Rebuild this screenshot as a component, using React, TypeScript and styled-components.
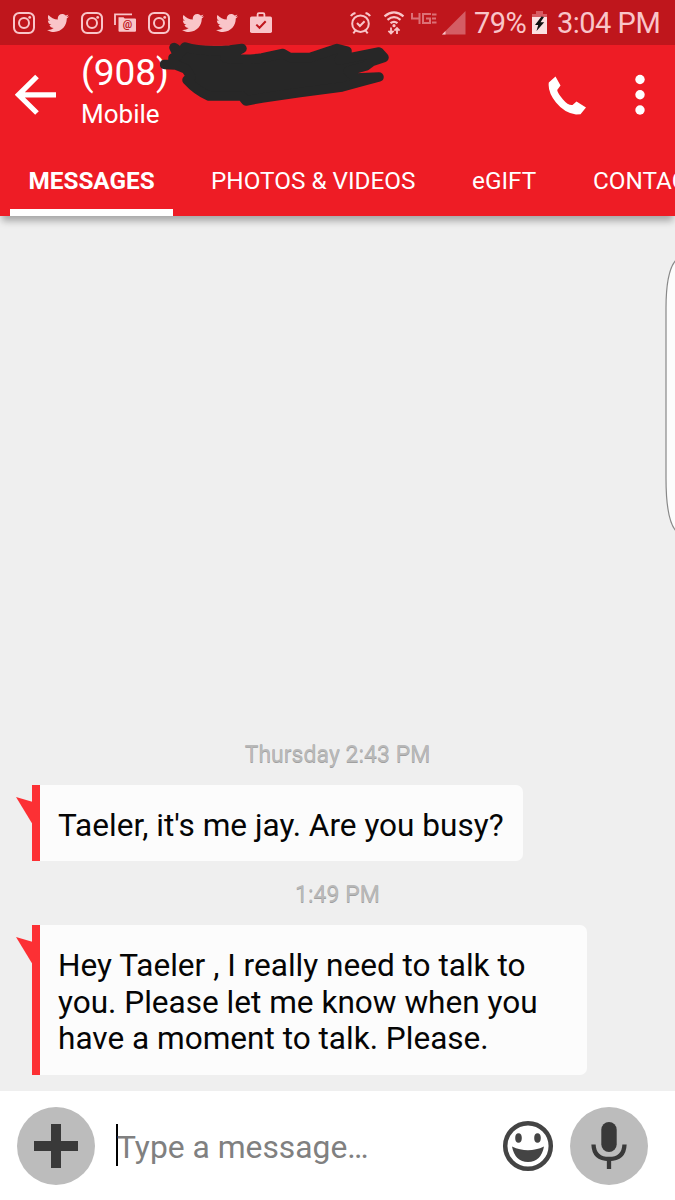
import React from "react";
import styled, { createGlobalStyle } from "styled-components";
import { FaTwitter } from "react-icons/fa";

const GlobalStyle = createGlobalStyle`
  * { box-sizing: border-box; }
  body { margin: 0; background: #efefef; font-family: Roboto, "Liberation Sans", sans-serif; }
`;

const Screen = styled.main`
  width: 675px;
  height: 1200px;
  display: flex;
  flex-direction: column;
  overflow: hidden;
  background: #efefef;
`;

const StatusBar = styled.div`
  height: 45px;
  flex: none;
  display: flex;
  align-items: center;
  justify-content: space-between;
  padding: 0 15px 0 13px;
  background: #bf161c;
  color: #f9c5c9;
`;

const Notifications = styled.div`
  display: flex;
  gap: 11.8px;
  svg { display: block; width: 22px; height: 22px; }
`;

const SystemStatus = styled.div`
  display: flex;
  align-items: center;
  svg { display: block; flex: none; }
`;

const StatusText = styled.span<{ $width: number; $left: number }>`
  width: ${(p) => p.$width}px;
  margin-left: ${(p) => p.$left}px;
  font-size: 29px;
  line-height: 45px;
  letter-spacing: -0.5px;
  white-space: nowrap;
  padding-top: 2px;
`;

const NetworkLabel = styled.span`
  width: 26px;
  height: 12px;
  margin: 0 5px 8px 6px;
  display: flex;
  align-items: flex-start;
`;

const AlarmIcon = styled.svg`
  margin-right: 12px;
`;

const Header = styled.header`
  position: relative;
  z-index: 1;
  height: 170.5px;
  flex: none;
  display: flex;
  flex-direction: column;
  background: #ee1c25;
  color: #fff;
  box-shadow: 0 7px 7px -2px rgba(0, 0, 0, 0.3);
`;

const ContactBar = styled.div`
  height: 102px;
  display: flex;
  align-items: center;
  padding: 0 30px 2px 15px;
  svg { display: block; flex: none; }
`;

const Contact = styled.div`
  position: relative;
  flex: 1;
  height: 100px;
  margin-left: 24px;
`;

const PhoneNumber = styled.div`
  height: 47px;
  padding-top: 6px;
  font-size: 37px;
  line-height: 44px;
`;

const PhoneKind = styled.div`
  padding-top: 7px;
  font-size: 26px;
  line-height: 30px;
`;

const Scribble = styled.svg`
  position: absolute;
  left: 79px;
  top: -5px;
`;

const MenuIcon = styled.svg`
  margin-left: 49px;
`;

const Tabs = styled.nav`
  height: 68.5px;
  display: flex;
  padding-left: 9.5px;
  overflow: hidden;
`;

const Tab = styled.div<{ $width: number; $active?: boolean }>`
  flex: none;
  width: ${(p) => p.$width}px;
  height: 68.5px;
  margin-right: ${(p) => (p.$active ? 19 : 0)}px;
  padding: 19px 0 0 19px;
  font-size: 24.3px;
  line-height: 30px;
  font-weight: ${(p) => (p.$active ? 700 : 400)};
  white-space: nowrap;
  border-bottom: 7.5px solid ${(p) => (p.$active ? "#fff" : "transparent")};
`;

const Conversation = styled.section`
  position: relative;
  flex: 1;
  display: flex;
  flex-direction: column;
  justify-content: flex-end;
  align-items: flex-start;
  padding: 0 0 16px 32px;
`;

const Timestamp = styled.time<{ $top?: number }>`
  align-self: center;
  margin: ${(p) => p.$top ?? 0}px 0 15px -32px;
  height: 30px;
  font-size: 23.05px;
  line-height: 30px;
  color: #b9b9b9;
  text-shadow: 0 1px 0 #a0a0a0;
`;

const Bubble = styled.article<{ $width: number; $height: number }>`
  position: relative;
  width: ${(p) => p.$width}px;
  height: ${(p) => p.$height}px;
  padding: 23px 0 0 18px;
  border-left: 8px solid #fc3034;
  border-radius: 0 7px 7px 0;
  background: #fcfcfc;
  color: #050505;
  font-size: 31.57px;
  line-height: 36.6px;
  white-space: nowrap;
`;

const Tail = styled.svg`
  position: absolute;
  left: -24px;
  top: 12px;
`;

const Line = styled.div``;

const EdgePanel = styled.svg`
  position: absolute;
  right: 0;
  top: 38px;
`;

const Composer = styled.footer`
  height: 109.5px;
  flex: none;
  display: flex;
  align-items: center;
  padding: 1px 27px 0 16.5px;
  background: #fff;
  svg { display: block; flex: none; }
`;

const RoundButton = styled.div<{ $left?: number }>`
  flex: none;
  width: 78px;
  height: 78px;
  margin-left: ${(p) => p.$left ?? 0}px;
  border-radius: 50%;
  display: grid;
  place-items: center;
  background: #bcbcbc;
`;

const Caret = styled.span`
  flex: none;
  width: 2px;
  height: 42px;
  margin: 0 -1px 2px 21.5px;
  background: #000;
`;

const Placeholder = styled.span`
  flex: 1;
  padding-top: 2px;
  font-size: 31.8px;
  line-height: 40px;
  color: #808080;
  white-space: nowrap;
`;

const InstagramIcon = () => (
  <svg viewBox="0 0 22 22" fill="none" stroke="currentColor" strokeWidth="2">
    <rect x="1" y="1" width="20" height="20" rx="5.2" />
    <circle cx="11" cy="11" r="5" />
    <circle cx="16.7" cy="5.4" r="1.4" fill="currentColor" stroke="none" />
  </svg>
);

const MailStackIcon = () => (
  <svg viewBox="0 0 22 22">
    <path d="M1 13V2.3h17" fill="none" stroke="currentColor" strokeWidth="1.8" />
    <path d="M4.5 5.2h5l1.2 1.3H21a1 1 0 0 1 1 1v11.2a1 1 0 0 1-1 1H5.5a1 1 0 0 1-1-1z" fill="currentColor" />
    <text x="13.4" y="15.8" textAnchor="middle" fontSize="10.5" fontWeight="700" fill="#bf161c">@</text>
  </svg>
);

const WorkIcon = () => (
  <svg viewBox="0 0 22 22">
    <path d="M7.6 6V2.500q0-1.300 1.300-1.300h4.200q1.300 0 1.300 1.300V6" fill="none" stroke="currentColor" strokeWidth="1.8" />
    <rect y="4.5" width="22" height="16.5" rx="1.7" fill="currentColor" />
    <path d="M6.3 12.600l3.200 3.200 6.200-6.500" fill="none" stroke="#bf161c" strokeWidth="2" />
  </svg>
);

const App = () => (
  <>
    <GlobalStyle />
    <Screen>
      <StatusBar>
        <Notifications>
          <InstagramIcon />
          <FaTwitter />
          <InstagramIcon />
          <MailStackIcon />
          <InstagramIcon />
          <FaTwitter />
          <FaTwitter />
          <WorkIcon />
        </Notifications>
        <SystemStatus>
          <AlarmIcon width="21" height="24" viewBox="0 0 21 24" fill="none" stroke="currentColor" strokeWidth="2">
            <circle cx="10.5" cy="12.7" r="8.3" />
            <path d="M7 12l2.900 3 4.700-4.700M1 5.200Q2 2.800 5.500 2M20 5.200Q19 2.800 15.500 2M5.500 19.500L3.300 22.300M15.500 19.500l2.200 2.800" />
          </AlarmIcon>
          <svg width="22" height="24" viewBox="0 0 22 24" fill="none" stroke="currentColor" strokeWidth="2.2">
            <path d="M1.500 5.300Q11-2.500 20.500 5.300M4.500 8.800Q11 3.600 17.500 8.800M7.500 12.200Q11 9.500 14.500 12.200" />
            <circle cx="11" cy="14.7" r="1.6" fill="currentColor" stroke="none" />
            <path d="M8 16.500v6M5.400 19.900L8 22.500l2.600-2.600M14 23v-6M11.400 19.600L14 17l2.600 2.600" strokeWidth="1.8" />
          </svg>
          <NetworkLabel>
            <svg width="26" height="12" viewBox="0 0 26 12" fill="none" stroke="#dc7076" strokeWidth="2">
              <path d="M1 0v5.500h8M8.500 0v11M20 1h-8v9h7V5.500h-4M21 1.500h4.500M21 5.500h4M21 9.500h4.500" />
            </svg>
          </NetworkLabel>
          <svg width="24" height="24" viewBox="0 0 24 24">
            <path d="M0 23.500L23.500 0v23.500z" fill="#d45d64" />
            <path d="M0 23.500l3.500-3.500v3.500z" fill="#f9c5c9" />
          </svg>
          <StatusText $width={58} $left={8}>79%</StatusText>
          <svg width="15" height="23" viewBox="0 0 15 23">
            <path d="M4 0h7v3H4zM0 3h15v4H0z" fill="#d75b63" />
            <path d="M0 6h15v17H0z" fill="#fce0e2" />
            <path d="M9.500 5.500L3 14h3.200L4.500 20l7.700-8.700H8.500L12 6z" fill="#111" />
          </svg>
          <StatusText $width={103} $left={10}>3:04 PM</StatusText>
        </SystemStatus>
      </StatusBar>

      <Header>
        <ContactBar>
          <svg width="42" height="42" viewBox="0 0 42 42" fill="none" stroke="#fff" strokeWidth="5.2">
            <path d="M41 20.800H4M22 2.500L3.500 20.800 22 39" />
          </svg>
          <Contact>
            <PhoneNumber>(908)</PhoneNumber>
            <PhoneKind>Mobile</PhoneKind>
            <Scribble width="232" height="68" viewBox="160 40 232 68">
              <path
                d="M164.500 64.500L173 64L173 58L178 56L174 47.500L181 52L185 47Q200 52 230 50L242 48.500L235 52L225 58Q245 60.500 262 58L283 53.500L290 57.500H310L337 48.500L347 51L339 60L379 52L384 57.500L372 61.500L366 66L348 71L356 78L379 77L364 81L342 87L300 92.500L262 98L246 101L242 96L209 96Q197 91 187 80L191 77L186 69L176 65z"
                fill="#272727"
                stroke="#272727"
                strokeWidth="9.5"
                strokeLinejoin="round"
                strokeLinecap="round"
              />
            </Scribble>
          </Contact>
          <svg width="38" height="39" viewBox="0 0 38 39">
            <path d="M7.500 0.500L0.800 6.500Q-0.500 16 8 26.500Q16.500 37 28 38.500L32.500 38.200L38 31.500L28.500 25.500L24.500 29Q20 29.500 15 23.500Q9.500 17 9.200 14L12.500 9.500z" fill="#fff" />
          </svg>
          <MenuIcon width="10" height="42" viewBox="0 0 10 42" fill="#fff">
            <circle cx="5" cy="5.5" r="4.7" />
            <circle cx="5" cy="20.8" r="4.7" />
            <circle cx="5" cy="36" r="4.7" />
          </MenuIcon>
        </ContactBar>
        <Tabs>
          <Tab $width={163.5} $active>MESSAGES</Tab>
          <Tab $width={261}>PHOTOS &amp; VIDEOS</Tab>
          <Tab $width={121}>eGIFT</Tab>
          <Tab $width={150}>CONTACT</Tab>
        </Tabs>
      </Header>

      <Conversation>
        <Timestamp>Thursday 2:43 PM</Timestamp>
        <Bubble $width={491} $height={76}>
          <Tail width="17" height="28"><path d="M0 0l17 5v23z" fill="#fc3034" /></Tail>
          <Line>Taeler, it's me jay. Are you busy?</Line>
        </Bubble>
        <Timestamp $top={19}>1:49 PM</Timestamp>
        <Bubble $width={555} $height={149.5}>
          <Tail width="17" height="28"><path d="M0 0l17 5v23z" fill="#fc3034" /></Tail>
          <Line>Hey Taeler , I really need to talk to</Line>
          <Line>you. Please let me know when you</Line>
          <Line>have a moment to talk. Please.</Line>
        </Bubble>
        <EdgePanel width="10" height="284" viewBox="0 0 10 284">
          <path d="M11 6Q1 17 1 54V224Q1 266 11 277" fill="#fcfcfc" stroke="#888" strokeWidth="1.2" />
        </EdgePanel>
      </Conversation>

      <Composer>
        <RoundButton>
          <svg width="44" height="44" viewBox="0 0 44 44">
            <path d="M17 0h10v17h17v10H27v17H17V27H0V17h17z" fill="#393939" />
          </svg>
        </RoundButton>
        <Caret />
        <Placeholder>Type a message…</Placeholder>
        <svg width="52" height="52" viewBox="0 0 52 52" fill="#444">
          <circle cx="26" cy="26" r="22.8" fill="none" stroke="#444" strokeWidth="4.5" />
          <ellipse cx="16.5" cy="18" rx="3.3" ry="4.8" />
          <ellipse cx="35.5" cy="18" rx="3.3" ry="4.8" />
          <path d="M10 26.500Q26 34 42 26.500Q39 42 26 42Q13 42 10 26.500z" />
        </svg>
        <RoundButton $left={16.5}>
          <svg width="36" height="48" viewBox="0 0 36 48">
            <rect x="10.3" y="0" width="15.4" height="30" rx="7.7" fill="#393939" />
            <path d="M2.500 22.500Q3 37 18 37Q33 37 33.500 22.500M18 36v11" fill="none" stroke="#393939" strokeWidth="4.3" />
          </svg>
        </RoundButton>
      </Composer>
    </Screen>
  </>
);

export default App;
